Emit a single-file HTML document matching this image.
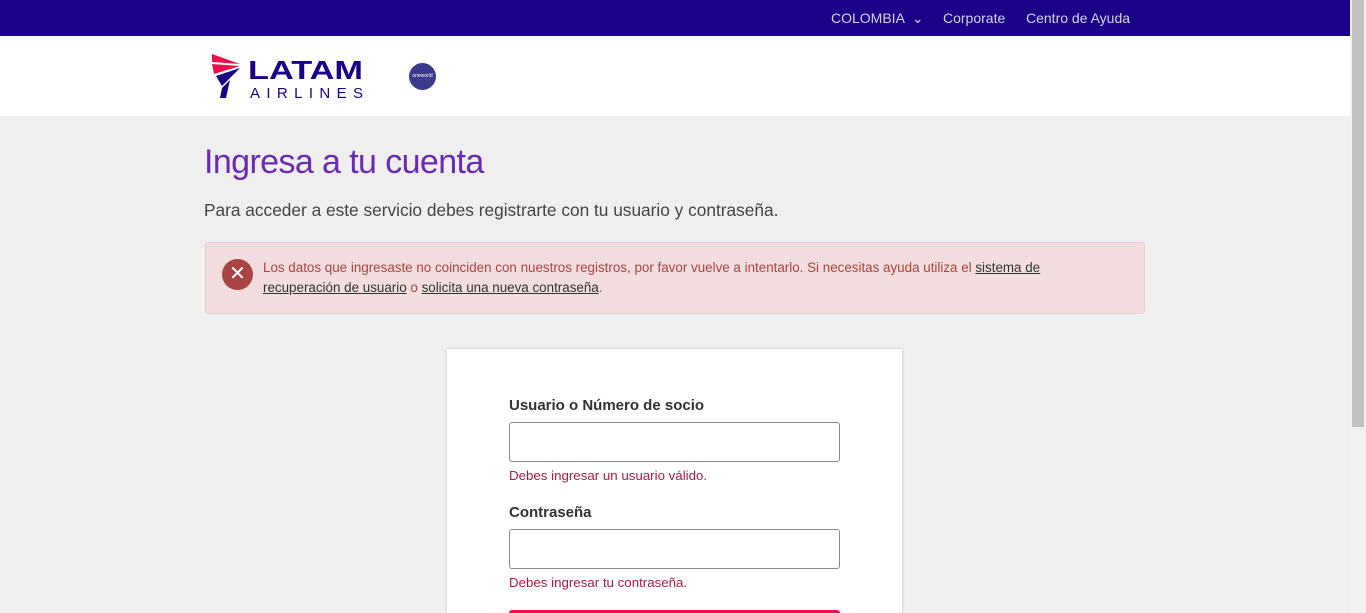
<!DOCTYPE html>
<html><head><meta charset="utf-8"><style>
*{margin:0;padding:0;box-sizing:border-box}
html,body{width:1366px;height:613px;overflow:hidden}
body{background:#efefef;font-family:"Liberation Sans",sans-serif;position:relative}
.top{position:absolute;left:0;top:0;width:1350px;height:36px;background:#1b0088;color:#d8d4ee;font-size:14px}
.top span{position:absolute;top:10px}
.hdr{position:absolute;left:0;top:36px;width:1350px;height:80px;background:#fff}
.sb{position:absolute;right:0;top:0;width:16px;height:613px;background:#f1f1f1}
.sb div{position:absolute;left:2px;top:0;width:12px;height:427px;background:#c1c1c1}
h1{position:absolute;left:204px;top:143px;font-weight:normal;font-size:34px;color:#6a2bb0;letter-spacing:-0.6px}
.sub{position:absolute;left:204px;top:200px;font-size:17.3px;color:#444}
.err{position:absolute;left:205px;top:242px;width:940px;height:72px;background:#f2dede;border:1px solid #ebccd1;border-radius:3px}
.err .ic{position:absolute;left:16px;top:16px;width:31px;height:31px;border-radius:50%;background:#a94442;color:#fff;text-align:center;font-size:20px;line-height:31px}
.err p{position:absolute;left:57px;top:15px;width:820px;font-size:13.4px;line-height:20px;color:#a94442}
.err a{color:#333;text-decoration:underline}
.card{position:absolute;left:447px;top:349px;width:455px;height:264px;background:#fff;box-shadow:0 0 3px rgba(0,0,0,.2)}
.lbl{position:absolute;left:62px;font-weight:bold;font-size:15px;color:#333}
.inp{position:absolute;left:62px;width:331px;height:40px;border:1px solid #888;border-radius:3px}
.msg{position:absolute;left:62px;font-size:13.3px;color:#b0193f}
.btn{position:absolute;left:62px;top:261px;width:331px;height:10px;background:#e8114b;border-radius:3px 3px 0 0}
</style></head><body>
<div class="top"><span style="left:831px">COLOMBIA &nbsp;⌄</span><span style="left:943px">Corporate</span><span style="left:1026px">Centro de Ayuda</span></div>
<div class="hdr">
<svg style="position:absolute;left:210px;top:16px" width="160" height="48" viewBox="0 0 160 48">
<path d="M2 2 L30 12 L2 10Z" fill="#e8114b"/><path d="M2 12 L30 14 L4 22Z" fill="#e8114b"/>
<path d="M6 24 L30 16 L12 34Z" fill="#1b0088"/><path d="M12 36 L20 28 L16 46 L10 46Z" fill="#1b0088"/>
<text x="38" y="27" font-family="Liberation Sans" font-weight="bold" font-size="26" textLength="115" lengthAdjust="spacingAndGlyphs" fill="#1b0088">LATAM</text>
<text x="40" y="46" font-family="Liberation Sans" font-size="15" textLength="113" lengthAdjust="spacing" fill="#1b0088">AIRLINES</text>
</svg>
<div style="position:absolute;left:409px;top:27px;width:27px;height:27px;border-radius:50%;background:#3b3a8c;color:#fff;font-size:5px;text-align:center;line-height:27px">oneworld</div>
</div>
<h1>Ingresa a tu cuenta</h1>
<div class="sub">Para acceder a este servicio debes registrarte con tu usuario y contraseña.</div>
<div class="err"><div class="ic">✕</div><p>Los datos que ingresaste no coinciden con nuestros registros, por favor vuelve a intentarlo. Si necesitas ayuda utiliza el <a>sistema de</a><br><a>recuperación de usuario</a> o <a>solicita una nueva contraseña</a>.</p></div>
<div class="card">
<div class="lbl" style="top:48px">Usuario o Número de socio</div>
<div class="inp" style="top:73px"></div>
<div class="msg" style="top:119px">Debes ingresar un usuario válido.</div>
<div class="lbl" style="top:155px">Contraseña</div>
<div class="inp" style="top:180px"></div>
<div class="msg" style="top:226px">Debes ingresar tu contraseña.</div>
<div class="btn"></div>
</div>
<div class="sb"><div></div></div>
</body></html>
